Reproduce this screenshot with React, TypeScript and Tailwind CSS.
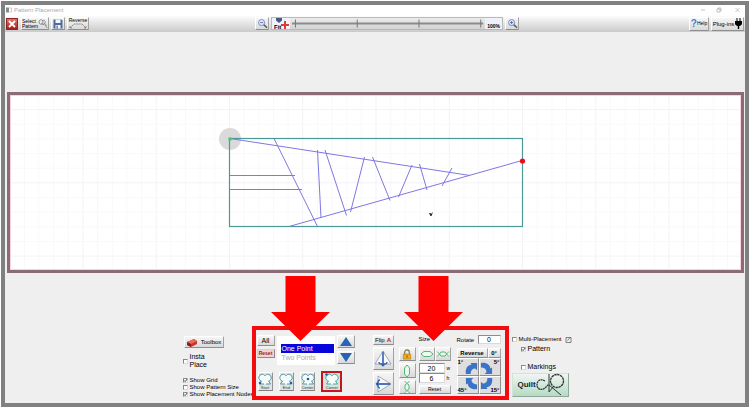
import React, { useState } from "react";

const bevel =
  "flex items-center justify-center border border-t-white border-l-white border-r-[#a2a2a2] border-b-[#8e8e8e] bg-linear-to-b from-[#f6f6f6] to-[#d9d9d9]";

function Tool({
  label,
  className = "",
  children,
}: {
  label: string;
  className?: string;
  children: React.ReactNode;
}) {
  return (
    <button type="button" aria-label={label} className={`${bevel} ${className}`}>
      {children}
    </button>
  );
}

function Check({
  label,
  checked = false,
  className = "",
}: {
  label: React.ReactNode;
  checked?: boolean;
  className?: string;
}) {
  const [on, setOn] = useState(checked);
  return (
    <label className={`flex items-center gap-[2px] whitespace-nowrap ${className}`}>
      <span className="relative block size-[5px] shrink-0">
        <input
          type="checkbox"
          checked={on}
          onChange={(e) => setOn(e.target.checked)}
          className="block size-[5px] appearance-none border border-[#d8d8d8] border-t-[#888] border-l-[#888] bg-white"
        />
        {on && (
          <svg viewBox="0 0 5 5" className="pointer-events-none absolute inset-0">
            <path d="M1 2.4 2.1 3.6 4.2 1" fill="none" stroke="#333" strokeWidth="0.9" />
          </svg>
        )}
      </span>
      <span>{label}</span>
    </label>
  );
}

function Magnifier({ plus }: { plus: boolean }) {
  return (
    <svg viewBox="0 0 12 12" className="size-[11px]">
      <circle cx="5" cy="5" r="3.3" fill="#e3ebfb" stroke="#6678b4" strokeWidth="0.9" />
      <path d={plus ? "M3.3 5h3.4M5 3.3v3.4" : "M3.3 5h3.4"} stroke="#4a5fb0" strokeWidth="0.9" />
      <path d="M7.5 7.5 11 10.7" stroke="#555" strokeWidth="1.5" />
    </svg>
  );
}

function TopBar() {
  return (
    <header>
      <div className="flex h-[10px] items-center bg-white pr-[4px] pl-[1px] text-[6px] leading-none text-[#aaa]">
        <svg viewBox="0 0 6 6" className="mr-[2px] size-[6px]">
          <path d="M0 .5h3v5H0z" fill="#8a8a8a" />
          <path d="M3.5 1h2v4h-2" fill="none" stroke="#bbb" strokeWidth=".8" />
        </svg>
        <span>Pattern Placement</span>
        <svg viewBox="0 0 40 6" className="ml-auto h-[6px] w-[40px]" fill="none" stroke="#aaa" strokeWidth=".7">
          <path d="M0 3h4M16 2h3v3h-3zM17 2V1h3v3h-1M34.500 1l4 4M38.500 1l-4 4" />
        </svg>
      </div>
      <div className="grid h-[17px] grid-cols-[1fr_auto_1fr] items-center bg-linear-to-b from-white to-[#cacaca]">
        <div className="flex items-center gap-[2px] pl-px">
          <button
            type="button"
            aria-label="Close"
            className="flex size-[12px] items-center justify-center border border-[#8f2424] bg-linear-to-b from-[#e27368] to-[#a51d1d]"
          >
            <svg viewBox="0 0 8 8" className="size-[8px]">
              <path d="m1 1 6 6M7 1 1 7" stroke="#fff" strokeWidth="1.8" />
            </svg>
          </button>
          <button type="button" className={`${bevel} ml-px h-[13px] w-[28px] text-[5px] leading-[5px] text-black`}>
            <span className="text-left">
              Select
              <br />
              Pattern
            </span>
            <svg viewBox="0 0 10 10" className="size-[10px]" fill="none" stroke="#777" strokeWidth=".8">
              <path d="M1 3c0-3 4-3 4 0s-4 3-4 0M4 2c2-2 4 0 3 2S3 6 4 4M5 6c1-2 4-1 3 1M7 6l2.500 3" />
            </svg>
          </button>
          <Tool label="Save" className="h-[13px] w-[14px]">
            <svg viewBox="0 0 10 10" className="size-[10px]">
              <path d="M.5.500h8l1 1v8h-9z" fill="#4f6c98" />
              <path d="M2.500.500h5v3.500h-5zM2.500 6h5v3.500h-5z" fill="#f3f7ff" />
              <path d="M3.500 6.500h1.300v3H3.500z" fill="#4f6c98" />
            </svg>
          </Tool>
          <button type="button" className={`${bevel} h-[13px] w-[22px] flex-col text-[5px] leading-[5px] text-black`}>
            Reverse
            <svg viewBox="0 0 18 6" className="h-[6px] w-[18px]" fill="none" stroke="#666" strokeWidth=".7">
              <path d="M1 5 5 1h8l4 4M1 3v2h2M15 5h2V3" strokeDasharray="2 .6" />
            </svg>
          </button>
        </div>
        <div className="flex items-center gap-[2px] pl-[24px]">
          <Tool label="Zoom out" className="h-[13px] w-[14px]">
            <Magnifier plus={false} />
          </Tool>
          <div className="flex h-[13px] w-[232px] items-center border border-[#b9b9b9] bg-linear-to-b from-[#ececec] to-[#d2d2d2] text-[6px] leading-none font-bold text-black">
            <div className="flex h-full w-[18px] items-end bg-[#eef2fa]">
              <svg viewBox="0 0 18 11" className="h-[11px] w-[18px]">
                <path d="M4 0h6v2.500L7 5 4 2.500z" fill="#4a5a87" />
                <text x="2" y="10.500" fontSize="6" fontWeight="700" fontFamily="Liberation Sans">
                  Fit
                </text>
                <path d="M13 3v8M9 7h8" stroke="#e33a33" strokeWidth="2" />
              </svg>
            </div>
            <svg viewBox="0 0 196 11" preserveAspectRatio="none" className="h-[11px] min-w-0 flex-1">
              <path d="M2 5.500h192" stroke="#8b8b8b" strokeWidth="2" />
              <path d="M5.500 1.500v8M67.500 1.500v8M129.500 1.500v8M191.500 1.500v8" stroke="#777" strokeWidth="1" />
            </svg>
            <span className="flex h-full items-end bg-[#eef2f8] px-[2px] text-[5px] leading-[6px]">100%</span>
          </div>
          <Tool label="Zoom in" className="h-[13px] w-[14px]">
            <Magnifier plus />
          </Tool>
        </div>
        <div className="flex items-center justify-end gap-[2px] pr-px text-black">
          <button type="button" className={`${bevel} h-[14px] w-[20px] text-[5px] leading-none`}>
            <span className="text-[10px] font-bold text-[#4d7fd0]">?</span>Help
          </button>
          <button type="button" className={`${bevel} h-[14px] w-[33px] gap-px text-[6px] leading-none`}>
            <span className="whitespace-nowrap">Plug-ins</span>
            <svg viewBox="0 0 7 11" className="h-[11px] w-[7px] shrink-0">
              <path d="M1.500 0h1v3h2V0h1v3H7v2.500C7 7 5.500 8 4.200 8v3H2.800V8C1.500 8 0 7 0 5.500V3h1.500z" />
            </svg>
          </button>
        </div>
      </div>
    </header>
  );
}

const minorX = Array.from({ length: 50 }, (_, i) => 9.75 + i * 14.65);
const minorY = Array.from({ length: 12 }, (_, i) => 94.95 + i * 14.65);

function Canvas() {
  return (
    <div className="mr-px ml-[2px] border-[3px] border-[#8b6c74] bg-white">
      <svg viewBox="10 95 731 175" className="block w-full">
        {minorX.map((x, i) => (
          <path key={i} d={`M${x} 96v173`} stroke={i % 5 === 0 ? "#f3f3f6" : "#f9f9fa"} />
        ))}
        {minorY.map((y, i) => (
          <path key={i} d={`M11 ${y}h729`} stroke={i % 5 === 1 ? "#f4f2f7" : "#f9f9fa"} />
        ))}
        <rect x="10.500" y="95.500" width="730" height="174" fill="none" stroke="#f8d4de" />
        <circle cx="230" cy="139" r="11" fill="#dadada" />
        <rect x="229.500" y="138.500" width="293" height="88" fill="none" stroke="#4b9a97" strokeWidth="1.200" />
        <path
          d="M230 138.500 470 175.500M289 226.500 522 160.500M274 138.500 317.500 226.500M230 175.500h65M230 189.500h72M317.500 150 321 218M325 150 346.500 215.500M364.500 157 350.500 212M372.500 157 390 200.500M412 165 398.500 197M419.500 164 427 190M452 168 442 186"
          fill="none"
          stroke="#7f77e4"
        />
        <rect x="228.500" y="137.500" width="3" height="3" fill="#35d065" />
        <circle cx="522.500" cy="161" r="2.600" fill="#f00b1b" />
        <path d="M429 213h1.500l.5 1 2-2-1.500 4h-1z" fill="#222" />
      </svg>
    </div>
  );
}

function NodeShape({ name, dot, active = false }: { name: string; dot?: [number, number]; active?: boolean }) {
  return (
    <button
      type="button"
      className={`flex flex-col items-center justify-between text-[4px] leading-[5px] text-[#333] ${
        active
          ? "h-[21px] w-[21px] border-2 border-[#c8141c] bg-[#d5e3df]"
          : "h-[19px] w-[15px] border border-t-white border-l-white border-r-[#929292] border-b-[#818181] bg-[#dbe5e4]"
      }`}
    >
      <svg viewBox="0 0 14 12" className="h-[12px] w-[14px]">
        <path
          d="M6 11H1.500L3.500 8C0 7 0 3 3 1.500c2-.8 3 .2 4 1.300 1-1.100 2-2.100 4-1.300 3 1.500 3 5.500-.5 6.500l2 3H8"
          fill="#f3fbfb"
          stroke={active ? "#43a99a" : "#5d95a0"}
          strokeWidth="1"
        />
        {dot && <circle cx={dot[0]} cy={dot[1]} r="1.300" fill="#2858b5" />}
      </svg>
      {name}
    </button>
  );
}

function RedArrow({ className }: { className: string }) {
  return (
    <svg viewBox="0 0 59 65" className={`pointer-events-none absolute -top-[54px] h-[65px] w-[59px] ${className}`}>
      <path d="M14.500 0h30v36H59L29.500 65 0 36h14.500z" fill="#fe0000" />
    </svg>
  );
}

function Stretch({ inward = false, className = "" }: { inward?: boolean; className?: string }) {
  return (
    <svg viewBox="0 0 14 8" className={`h-[8px] w-[14px] shrink-0 ${className}`} fill="#ecfaef" stroke="#55b678" strokeWidth="1">
      {inward ? (
        <path d="M1 1.500 3.500 4 1 6.500M13 1.500 10.500 4 13 6.500M5 2h4l1.500 2L9 6H5L3.500 4z" />
      ) : (
        <path d="M4 1.500h6L13 4l-3 2.500H4L1 4z" />
      )}
    </svg>
  );
}

const field =
  "min-w-0 border border-[#d9d9d9] border-t-[#8c8c8c] border-l-[#8c8c8c] bg-white p-0 text-center text-[7px] leading-none text-black";

const turns = [
  { label: "1°", at: "items-start justify-start", icon: "right-0 bottom-0" },
  { label: "5°", at: "items-start justify-end", icon: "bottom-0 left-0 rotate-90" },
  { label: "45°", at: "items-end justify-start", icon: "top-0 right-0 -rotate-90" },
  { label: "15°", at: "items-end justify-end", icon: "top-0 left-0 rotate-180" },
];

function Panel() {
  return (
    <section className="relative flex h-[74px] w-[257px] shrink-0 border-[4px] border-[#f40b10] px-px pt-[5px]">
      <div className="flex w-[98px] flex-col">
        <div className="flex justify-between">
          <div className="flex w-[18px] flex-col gap-[3px] text-black">
            <button type="button" className={`${bevel} h-[11px] text-[7px] leading-none`}>
              All
            </button>
            <button
              type="button"
              className="h-[9px] border border-[#e8c8c8] border-r-[#a08080] border-b-[#a08080] bg-[#f0d4d4] text-[5px] leading-none font-bold text-[#a51c1c]"
            >
              Reset
            </button>
          </div>
          <ul className="mt-px h-[29px] w-[58px] bg-white pt-[8px] pr-px pl-[4px] text-[7px] leading-[9px]">
            <li className="bg-[#0606dc] pl-px text-white">One Point</li>
            <li className="pl-px text-[#aaa]">Two Points</li>
          </ul>
          <div className="flex w-[18px] flex-col gap-[3px]">
            <Tool label="Move up" className="h-[13px]">
              <svg viewBox="0 0 14 9" className="h-[9px] w-[14px]">
                <path d="M7 0 13 9H1z" fill="#2a63b4" />
              </svg>
            </Tool>
            <Tool label="Move down" className="h-[13px]">
              <svg viewBox="0 0 14 9" className="h-[9px] w-[14px]">
                <path d="M7 9 13 0H1z" fill="#2a63b4" />
              </svg>
            </Tool>
          </div>
        </div>
        <div className="mt-[6px] flex w-[86px] items-center justify-between pl-px">
          <NodeShape name="Start" dot={[2, 10]} />
          <NodeShape name="End" dot={[12, 10]} />
          <NodeShape name="Center" dot={[7, 6]} />
          <NodeShape name="Corner" dot={[1.5, 1.5]} active />
        </div>
      </div>

      <div className="ml-[18px] flex w-[21px] flex-col gap-[2px]">
        <button type="button" className={`${bevel} h-[10px] gap-[2px] text-[6px] leading-none text-black`}>
          Flip <span className="font-bold text-[#b32020]">A</span>
        </button>
        <Tool label="Flip horizontally" className="h-[23px]">
          <svg viewBox="0 0 18 18" className="size-[18px]">
            <path d="M9 1v13H1zM9 1l8 13H9z" fill="#f6f8fc" stroke="#8c98ac" strokeWidth=".8" />
            <path d="M9 2v14M5 12c0 3 8 3 8 0M9 16l-2-2.500M9 16l2-2.500" fill="none" stroke="#2d5eb4" strokeWidth="1.300" />
          </svg>
        </Tool>
        <Tool label="Flip vertically" className="h-[23px]">
          <svg viewBox="0 0 18 18" className="size-[18px] -rotate-90">
            <path d="M9 1v13H1zM9 1l8 13H9z" fill="#f6f8fc" stroke="#8c98ac" strokeWidth=".8" transform="rotate(180 9 9)" />
            <path d="M9 2v14M5 6c0-3 8-3 8 0M9 2 7 4.500M9 2l2 2.500" fill="none" stroke="#2d5eb4" strokeWidth="1.300" />
          </svg>
        </Tool>
      </div>

      <div className="ml-[5px] flex w-[17px] flex-col gap-[2px] pt-[12px]">
        <Tool label="Lock proportions" className="h-[14px]">
          <svg viewBox="0 0 10 12" className="h-[11px] w-[10px]">
            <path d="M2.500 6V3.500a2.500 2.500 0 0 1 5 0V6" fill="none" stroke="#77704a" strokeWidth="1.200" />
            <path d="M1 5.500h8V11H1z" fill="#f1ab22" stroke="#b27a16" strokeWidth=".7" />
            <path d="M5 7v2.500" stroke="#6b4a10" />
          </svg>
        </Tool>
        <Tool label="Taller" className="h-[15px]">
          <Stretch className="rotate-90" />
        </Tool>
        <Tool label="Shorter" className="h-[14px]">
          <Stretch inward className="rotate-90" />
        </Tool>
      </div>

      <div className="ml-[3px] flex w-[32px] flex-col text-[7px] leading-none text-black">
        <span className="h-[12px] text-[6px] leading-[9px]">Size</span>
        <div className="grid grid-cols-2">
          <Tool label="Wider" className="h-[14px]">
            <Stretch />
          </Tool>
          <Tool label="Narrower" className="h-[14px]">
            <Stretch inward />
          </Tool>
        </div>
        <label className="mt-[2px] flex items-center gap-[2px] text-[5px]">
          <input aria-label="Width" defaultValue="20" className={`${field} h-[10px] w-[26px]`} />w
        </label>
        <label className="flex items-center gap-[2px] text-[5px]">
          <input aria-label="Height" defaultValue="6" className={`${field} h-[10px] w-[26px]`} />h
        </label>
        <button type="button" className={`${bevel} mt-[2px] h-[9px] text-[5px]`}>
          Reset
        </button>
      </div>

      <div className="ml-[6px] w-[44px] text-[6px] leading-none text-black">
        <label className="flex h-[9px] items-center justify-between">
          Rotate
          <input defaultValue="0" className={`${field} h-[9px] w-[23px]`} />
        </label>
        <div className="mt-[4px] flex h-[10px] font-bold">
          <button type="button" className={`${bevel} w-[31px]`}>
            Reverse
          </button>
          <button type="button" className={`${bevel} w-[13px]`}>
            0°
          </button>
        </div>
        <div className="grid grid-cols-2 font-bold">
          {turns.map((t) => (
            <button
              key={t.label}
              type="button"
              className={`relative flex h-[18px] border border-t-white border-l-white border-r-[#8e8e8e] border-b-[#8e8e8e] bg-[#dedede] ${t.at}`}
            >
              <svg viewBox="0 0 14 14" className={`absolute size-[13px] ${t.icon}`}>
                <path d="M1 13C0 7 3 3 7 3L6 1h7v8l-2-2C8 7 6 9 6 13z" fill="#3b74c4" />
              </svg>
              <span className="relative">{t.label}</span>
            </button>
          ))}
        </div>
      </div>

      <RedArrow className="left-[15px]" />
      <RedArrow className="left-[148px]" />
    </section>
  );
}

function BottomBar() {
  return (
    <div className="flex flex-1 justify-center pt-[53px] pb-[3px] pl-[5px] text-black">
      <div className="flex w-[69px] shrink-0 flex-col items-start pt-[10px] text-[6px] leading-[7px]">
        <button type="button" className={`${bevel} ml-px h-[12px] w-[40px] gap-[3px] text-[6px] leading-none`}>
          <svg viewBox="0 0 12 9" className="h-[9px] w-[12px]">
            <path d="M1 4 8 1l3 2v3L5 9 1 7z" fill="#c8342c" />
            <path d="M1 4 8 1l3 2-6 3z" fill="#ea6b5c" />
            <path d="M1 4 5 6v3L1 7z" fill="#8c1c1a" />
          </svg>
          Toolbox
        </button>
        <Check
          label={
            <>
              Insta
              <br />
              Place
            </>
          }
          className="mt-[5px] text-[7px] leading-[8px]"
        />
        <Check label="Show Grid" checked className="mt-[8px]" />
        <Check label="Show Pattern Size" />
        <Check label="Show Placement Nodes" checked />
      </div>
      <Panel />
      <div className="flex w-[64px] shrink-0 flex-col items-start pt-[9px] pl-[3px] text-[7px] leading-[8px]">
        <div className="flex items-center gap-[3px] text-[6px]">
          <Check label="Multi-Placement" />
          <svg viewBox="0 0 7 7" className="size-[7px] shrink-0" fill="none" stroke="#666">
            <path d="M1 1.500h5v5H1zM2.500 4.500 5.500 1" strokeWidth=".8" />
          </svg>
        </div>
        <Check label="Pattern" checked className="mt-[2px] ml-[9px]" />
        <Check label="Markings" className="mt-[10px] ml-[9px]" />
        <button
          type="button"
          className="mt-[2px] flex h-[24px] w-[57px] items-center border border-[#d2e2d8] border-r-[#8fa89a] border-b-[#8fa89a] bg-linear-to-b from-[#f0f5f2] to-[#b5dbc4] pl-[5px] text-[8px] leading-none font-bold text-[#222]"
        >
          Quilt
          <svg viewBox="0 0 32 24" className="h-[24px] w-[32px] shrink-0" fill="none" stroke="#2f3a36" strokeWidth="1.300">
            <path d="M9 8C4 5 1 8 1 12s4 6 8 3l4-4" strokeDasharray="2 .5" />
            <circle cx="21" cy="8" r="6.500" strokeDasharray="2.500 .5" />
            <path d="M13 1v18M13 12l12 10M17 14l-4 5" strokeWidth="1" />
          </svg>
        </button>
      </div>
    </div>
  );
}

export default function App() {
  return (
    <div className="flex min-h-screen flex-col bg-white p-px font-['Liberation_Sans',Arial,sans-serif]">
      <main className="flex flex-1 flex-col border-[4px] border-[#7f8180] bg-[#efefef]">
        <TopBar />
        <div className="pt-[60px]">
          <Canvas />
        </div>
        <BottomBar />
      </main>
    </div>
  );
}
